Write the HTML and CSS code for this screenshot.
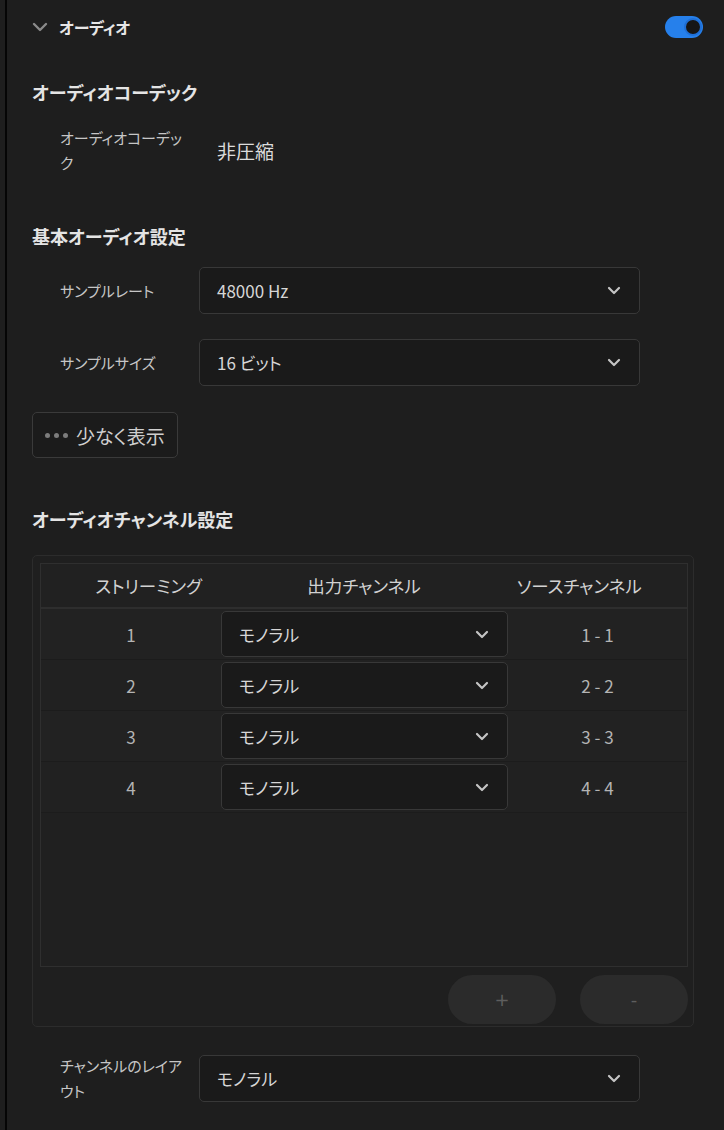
FILE: index.html
```html
<!DOCTYPE html>
<html lang="ja">
<head>
<meta charset="utf-8">
<title>オーディオ</title>
<link rel="stylesheet" href="styles.css">
</head>
<body>
<div class="page">
  <div class="gutter"></div>
  <div class="rule"></div>
  <main class="panel">
    <header class="panel-head">
      <div class="head-left">
        <svg class="head-chev" width="16" height="10" viewBox="0 0 16 10"><path d="M2 2 L8 8 L14 2" fill="none" stroke="#8a8a8a" stroke-width="2.4" stroke-linecap="round" stroke-linejoin="round"/></svg>
        <span class="head-title">オーディオ</span>
      </div>
      <div class="toggle"><span class="knob"></span></div>
    </header>

    <h2 class="section-title t-codec">オーディオコーデック</h2>
    <div class="field codec-row">
      <div class="label">オーディオコーデック</div>
      <div class="static-value">非圧縮</div>
    </div>

    <h2 class="section-title t-basic">基本オーディオ設定</h2>
    <div class="field f-rate">
      <div class="label">サンプルレート</div>
      <div class="select"><span>48000 Hz</span><svg class="chev" width="14" height="9" viewBox="0 0 14 9"><path d="M2 2 L7 7 L12 2" fill="none" stroke="#c4c4c4" stroke-width="2.2" stroke-linecap="round" stroke-linejoin="round"/></svg></div>
    </div>
    <div class="field f-size">
      <div class="label">サンプルサイズ</div>
      <div class="select"><span>16 ビット</span><svg class="chev" width="14" height="9" viewBox="0 0 14 9"><path d="M2 2 L7 7 L12 2" fill="none" stroke="#c4c4c4" stroke-width="2.2" stroke-linecap="round" stroke-linejoin="round"/></svg></div>
    </div>
    <button class="less-btn"><span class="dots"><i></i><i></i><i></i></span><span>少なく表示</span></button>

    <h2 class="section-title t-channel">オーディオチャンネル設定</h2>
    <div class="table-box">
      <div class="table">
        <div class="thead">
          <div>ストリーミング</div>
          <div>出力チャンネル</div>
          <div>ソースチャンネル</div>
        </div>
        <div class="trow">
          <div class="cell">1</div>
          <div class="select row-select"><span>モノラル</span><svg class="chev" width="14" height="9" viewBox="0 0 14 9"><path d="M2 2 L7 7 L12 2" fill="none" stroke="#c4c4c4" stroke-width="2.2" stroke-linecap="round" stroke-linejoin="round"/></svg></div>
          <div class="cell">1 - 1</div>
        </div>
        <div class="trow">
          <div class="cell">2</div>
          <div class="select row-select"><span>モノラル</span><svg class="chev" width="14" height="9" viewBox="0 0 14 9"><path d="M2 2 L7 7 L12 2" fill="none" stroke="#c4c4c4" stroke-width="2.2" stroke-linecap="round" stroke-linejoin="round"/></svg></div>
          <div class="cell">2 - 2</div>
        </div>
        <div class="trow">
          <div class="cell">3</div>
          <div class="select row-select"><span>モノラル</span><svg class="chev" width="14" height="9" viewBox="0 0 14 9"><path d="M2 2 L7 7 L12 2" fill="none" stroke="#c4c4c4" stroke-width="2.2" stroke-linecap="round" stroke-linejoin="round"/></svg></div>
          <div class="cell">3 - 3</div>
        </div>
        <div class="trow">
          <div class="cell">4</div>
          <div class="select row-select"><span>モノラル</span><svg class="chev" width="14" height="9" viewBox="0 0 14 9"><path d="M2 2 L7 7 L12 2" fill="none" stroke="#c4c4c4" stroke-width="2.2" stroke-linecap="round" stroke-linejoin="round"/></svg></div>
          <div class="cell">4 - 4</div>
        </div>
      </div>
      <div class="table-actions">
        <button class="pill">+</button>
        <button class="pill">-</button>
      </div>
    </div>

    <div class="field f-layout">
      <div class="label">チャンネルのレイアウト</div>
      <div class="select"><span>モノラル</span><svg class="chev" width="14" height="9" viewBox="0 0 14 9"><path d="M2 2 L7 7 L12 2" fill="none" stroke="#c4c4c4" stroke-width="2.2" stroke-linecap="round" stroke-linejoin="round"/></svg></div>
    </div>
  </main>
</div>
</body>
</html>
```
FILE: styles.css
```css
* { box-sizing: border-box; }
html, body {
  margin: 0;
  padding: 0;
  background: #1e1e1e;
}
body {
  font-family: "Noto Sans CJK JP", "Noto Sans", sans-serif;
  font-feature-settings: "palt" 1;
  color: #d4d4d4;
  width: 724px;
  height: 1130px;
  overflow: hidden;
}
.page {
  display: flex;
  height: 1130px;
}
.gutter { width: 5px; flex: none; }
.rule { width: 2px; flex: none; background: #050505; }
.panel {
  flex: 1;
  display: flex;
  flex-direction: column;
  padding: 0 21px 0 25px;
}

/* header */
.panel-head {
  height: 54px;
  display: flex;
  align-items: center;
  justify-content: space-between;
}
.head-left {
  display: flex;
  align-items: center;
  gap: 11px;
}
.head-chev { display: block; }
.head-title {
  font-size: 16px;
  font-weight: 700;
  color: #e6e6e6;
  letter-spacing: -0.3px;
}
.toggle {
  width: 38px;
  height: 22px;
  border-radius: 11px;
  background: #2680eb;
  display: flex;
  align-items: center;
  justify-content: flex-end;
  padding-right: 1px;
}
.knob {
  width: 18px;
  height: 18px;
  border-radius: 50%;
  background: #161616;
  border: 2px solid #1f6fd6;
}

/* sections */
.section-title {
  margin: 0;
  font-size: 18px;
  line-height: 24px;
  font-weight: 700;
  color: #e4e4e4;
}
.t-codec { margin-top: 26px; }
.t-basic { margin-top: 49px; }
.t-channel { margin-top: 49px; }

.field {
  display: flex;
  align-items: center;
  padding-left: 28px;
}
.label {
  width: 139px;
  flex: none;
  font-size: 15px;
  line-height: 25px;
  color: #c6c6c6;
  padding-right: 12px;
}
.static-value {
  font-size: 19px;
  color: #dcdcdc;
  padding-left: 18px;
}
.codec-row { margin-top: 21px; height: 50px; }
.f-rate { margin-top: 19px; }
.f-size { margin-top: 25px; }
.f-layout { margin-top: 26px; }

.select {
  width: 441px;
  height: 47px;
  display: flex;
  align-items: center;
  justify-content: space-between;
  padding: 0 18px 0 17px;
  background: #1a1a1a;
  border: 1px solid #383838;
  border-radius: 5px;
  font-size: 17px;
  color: #d6d6d6;
}
.chev { display: block; }

.less-btn {
  margin-top: 26px;
  align-self: flex-start;
  width: 146px;
  height: 46px;
  display: flex;
  align-items: center;
  gap: 8px;
  padding: 0 0 0 12px;
  background: #1b1b1b;
  border: 1px solid #3a3a3a;
  border-radius: 5px;
  font-family: inherit;
  font-feature-settings: "palt" 1;
  font-size: 19px;
  color: #cfcfcf;
}
.dots { display: flex; gap: 4px; }
.dots i {
  width: 5px;
  height: 5px;
  border-radius: 50%;
  background: #7c7c7c;
}

/* table */
.table-box {
  margin-top: 24px;
  width: 662px;
  border: 1px solid #2c2c2c;
  border-radius: 5px;
  background: #1f1f1f;
  padding: 7px 5px 2px 7px;
}
.table {
  height: 404px;
  border: 1px solid #2f2f2f;
  background: #202020;
}
.thead {
  height: 45px;
  display: grid;
  grid-template-columns: 1fr 1fr 1fr;
  align-items: center;
  text-align: center;
  font-size: 17.5px;
  color: #d2d2d2;
  border-bottom: 2px solid #2e2e2e;
  background: #212121;
}
.trow {
  height: 51px;
  display: grid;
  grid-template-columns: 180px 287px 1fr;
  align-items: center;
  border-bottom: 1px solid #1c1c1c;
  background: #222222;
}
.trow:nth-child(odd) { background: #212121; }
.cell {
  text-align: center;
  font-size: 17px;
  color: #b4b4b4;
}
.row-select {
  width: 287px;
  height: 46px;
  padding: 0 18px 0 17px;
}
.table-actions {
  display: flex;
  justify-content: flex-end;
  gap: 24px;
  padding: 8px 0 0 0;
}
.pill {
  width: 108px;
  height: 49px;
  border: none;
  border-radius: 25px;
  background: #2b2b2b;
  color: #5e5e5e;
  font-family: "DejaVu Sans", sans-serif;
  font-size: 18px;
}
```
